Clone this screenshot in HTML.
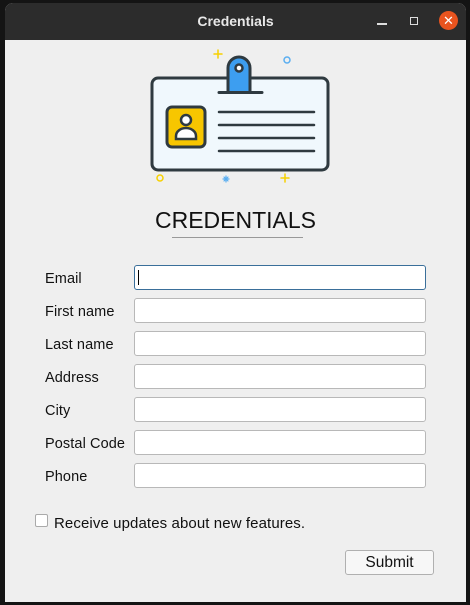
<!DOCTYPE html>
<html><head><meta charset="utf-8"><style>
*{margin:0;padding:0;box-sizing:border-box}
body{width:470px;height:605px;background:#141414;position:relative;overflow:hidden;font-family:"Liberation Sans","DejaVu Sans",sans-serif}
.win{position:absolute;left:5px;top:3px;width:461px;height:599px;background:#efefef;border-radius:8px 8px 0 0;overflow:hidden}
.tb{position:absolute;left:0;top:0;width:461px;height:37px;background:#2c2c2c;color:#e8e8e8;font-weight:bold;font-size:14px;text-align:center;line-height:37px}
.lbl{position:absolute;left:40px;font-size:14.5px;line-height:17px;color:#111;letter-spacing:0.1px;margin-top:2px}
.in{position:absolute;left:129px;width:292px;height:25px;background:#fff;border:1px solid #b8b8b8;border-radius:3px}
</style></head><body>
<div class="win">
<div class="tb">Credentials</div>
<div style="position:absolute;left:372px;top:20px;width:10px;height:1.5px;background:#ddd"></div>
<div style="position:absolute;left:405px;top:14px;width:8px;height:8px;border:1.5px solid #ddd"></div>
<div style="position:absolute;left:434px;top:8px;width:19px;height:19px;border-radius:50%;background:#e9541f;color:#fff;font-size:13px;line-height:19px;text-align:center">✕</div>
<svg style="position:absolute;left:0;top:0" width="461" height="200" viewBox="5 3 461 200">
<g fill="none" stroke-width="3" stroke-linecap="round">
<rect x="152" y="78" width="176" height="92" rx="6" fill="#f0f8fd" stroke="#2f3a40"/>
<path d="M228 92 V68 a11 11 0 0 1 22 0 V92" fill="#3d9ef0" stroke="#2f3a40"/>
<circle cx="239" cy="68" r="3.5" fill="#fff" stroke="#2f3a40" stroke-width="2.5"/>
<line x1="219" y1="92.5" x2="262" y2="92.5" stroke="#2f3a40"/>
<rect x="167" y="107" width="38" height="40" rx="5" fill="#f7c600" stroke="#2f3a40"/>
<circle cx="186" cy="120" r="5" fill="#fff" stroke="#2f3a40" stroke-width="2.5"/>
<path d="M176 139 v-3 a10 8 0 0 1 20 0 v3 z" fill="#fff" stroke="#2f3a40" stroke-width="2.5"/>
<g stroke="#2f3a40" stroke-width="2.5"><line x1="219" y1="112" x2="314" y2="112"/><line x1="219" y1="125" x2="314" y2="125"/><line x1="219" y1="138" x2="314" y2="138"/><line x1="219" y1="151" x2="314" y2="151"/></g>
<g stroke="#f7d000" stroke-width="1.5"><path d="M214 54h8M218 50v8M281 178h8M285 174v8"/></g>
<circle cx="287" cy="60" r="3" stroke="#5aaef0" stroke-width="1.5"/>
<circle cx="160" cy="178" r="3" stroke="#f7d000" stroke-width="1.5"/>
<path d="M223 179h6M226 176v6M224 177l4 4M228 177l-4 4" stroke="#5aaef0" stroke-width="1.2"/>
</g></svg>
<div style="position:absolute;left:0;width:461px;top:204px;text-align:center;font-size:23px;color:#111">CREDENTIALS</div>
<div style="position:absolute;left:167px;top:234px;width:131px;height:1px;background:#999"></div>
<div class="lbl" style="top:266px">Email</div><div class="in" style="top:262px;border-color:#3a6f9a"><div style="position:absolute;left:3px;top:4px;width:1px;height:15px;background:#000"></div></div>
<div class="lbl" style="top:299px">First name</div><div class="in" style="top:295px"></div>
<div class="lbl" style="top:332px">Last name</div><div class="in" style="top:328px"></div>
<div class="lbl" style="top:365px">Address</div><div class="in" style="top:361px"></div>
<div class="lbl" style="top:398px">City</div><div class="in" style="top:394px"></div>
<div class="lbl" style="top:431px">Postal Code</div><div class="in" style="top:427px"></div>
<div class="lbl" style="top:464px">Phone</div><div class="in" style="top:460px"></div>
<div style="position:absolute;left:30px;top:511px;width:13px;height:13px;background:#fff;border:1px solid #aaa;border-radius:2px"></div>
<div class="lbl" style="left:49px;top:510px;font-size:15px;letter-spacing:0.1px">Receive updates about new features.</div>
<div style="position:absolute;left:340px;top:547px;width:89px;height:25px;border:1px solid #b0b0b0;border-radius:3px;background:#f7f7f7;font-size:15.5px;text-align:center;line-height:23px;color:#111">Submit</div>
</div>
</body></html>
